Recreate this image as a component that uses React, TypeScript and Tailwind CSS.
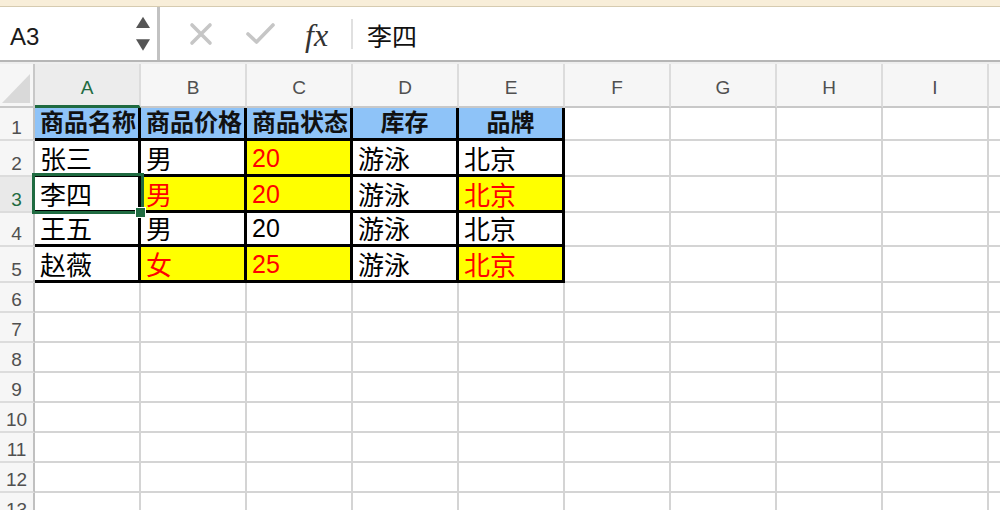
import React from "react";

type Cell = {
  t: string;
  bg?: "y" | "w" | "b";
  red?: boolean;
  center?: boolean;
  num?: boolean;
};

const cols = ["A", "B", "C", "D", "E", "F", "G", "H", "I"];

const table: Cell[][] = [
  [
    { t: "商品名称", bg: "b" },
    { t: "商品价格", bg: "b" },
    { t: "商品状态", bg: "b" },
    { t: "库存", bg: "b", center: true },
    { t: "品牌", bg: "b", center: true },
  ],
  [
    { t: "张三" },
    { t: "男" },
    { t: "20", bg: "y", red: true, num: true },
    { t: "游泳" },
    { t: "北京" },
  ],
  [
    { t: "李四" },
    { t: "男", bg: "y", red: true },
    { t: "20", bg: "y", red: true, num: true },
    { t: "游泳" },
    { t: "北京", bg: "y", red: true },
  ],
  [
    { t: "王五" },
    { t: "男" },
    { t: "20", num: true },
    { t: "游泳" },
    { t: "北京" },
  ],
  [
    { t: "赵薇" },
    { t: "女", bg: "y", red: true },
    { t: "25", bg: "y", red: true, num: true },
    { t: "游泳" },
    { t: "北京", bg: "y", red: true },
  ],
];

function DataCell({ c }: { c: Cell }) {
  if (c.bg === "b") {
    return (
      <div
        className={
          "flex items-center overflow-hidden whitespace-nowrap border-r-[3px] border-b-[3px] border-black bg-[#8ec3f8] text-[24px] font-bold leading-none text-[#111111] " +
          (c.center ? "justify-center" : "pl-[5px]")
        }
      >
        {c.t}
      </div>
    );
  }
  return (
    <div
      className={
        "flex items-end overflow-hidden whitespace-nowrap border-r-[3px] border-b-[3px] border-black pl-[5px] leading-none " +
        (c.bg === "y" ? "bg-[#ffff00] " : "bg-white ") +
        (c.red ? "text-[#ff0000] " : "text-black ") +
        (c.num ? "pb-[3px] text-[25px]" : "pb-[1px] text-[26px]")
      }
    >
      {c.t}
    </div>
  );
}

export default function App() {
  const rowCount = 13;
  const cells: React.ReactNode[] = [];

  cells.push(
    <div
      key="corner"
      className="relative border-r-2 border-b-2 border-[#c8c8c8] bg-[#f6f6f6]"
    >
      <svg className="absolute left-[2px] top-[10px]" width="29" height="29" viewBox="0 0 29 29">
        <polygon points="28,0 28,29 0,29" fill="#d9d9d9" />
      </svg>
    </div>
  );
  cols.forEach((c, i) => {
    cells.push(
      <div
        key={"h" + c}
        className={
          i === 0
            ? "flex items-center justify-center border-r-2 border-b-[3px] border-r-[#dcdcdc] border-b-[#1f6b41] bg-[#ececec] pt-[5px] text-[19px] leading-none text-[#1f6b41]"
            : "flex items-center justify-center border-r-2 border-b-2 border-r-[#dcdcdc] border-b-[#c8c8c8] bg-[#f6f6f6] pt-[4px] text-[19px] leading-none text-[#505050]"
        }
      >
        {c}
      </div>
    );
  });
  cells.push(
    <div key="hx" className="border-b-2 border-[#c8c8c8] bg-[#f6f6f6]" />
  );

  for (let r = 0; r < rowCount; r++) {
    const selected = r === 2;
    cells.push(
      <div
        key={"r" + r}
        className={
          selected
            ? "flex items-end justify-center border-r-2 border-b-2 border-r-[#c0c0c0] border-b-[#dcdcdc] bg-[#e9e9e9] pb-[2px] text-[19px] leading-none text-[#1f6b41]"
            : "flex items-end justify-center border-r-2 border-b-2 border-r-[#c0c0c0] border-b-[#dcdcdc] bg-[#f6f6f6] pb-[2px] text-[19px] leading-none text-[#505050]"
        }
      >
        {r + 1}
      </div>
    );
    for (let c = 0; c < 9; c++) {
      if (r < 5 && c < 5) {
        cells.push(<DataCell key={r + "-" + c} c={table[r][c]} />);
      } else {
        cells.push(
          <div
            key={r + "-" + c}
            className="border-r-2 border-b-2 border-[#d4d4d4] bg-white"
          />
        );
      }
    }
    cells.push(
      <div key={r + "-x"} className="border-b-2 border-[#d4d4d4] bg-white" />
    );
  }

  return (
    <div className="flex h-[510px] w-[1000px] flex-col overflow-hidden bg-white font-['Liberation_Sans','Noto_Sans_CJK_SC',sans-serif] text-black">
      {/* top strip */}
      <div className="h-[7px] shrink-0 border-b border-[#d6cbb0] bg-[#f8eed9]" />

      {/* formula bar */}
      <div className="flex h-[53px] shrink-0 items-center bg-white">
        <div className="flex h-full w-[157px] items-center justify-between pl-[10px] pr-[7px]">
          <span className="relative top-[3px] text-[24px] leading-none text-[#1a1a1a]">A3</span>
          <svg width="14" height="35" viewBox="0 0 14 35">
            <polygon points="0,12 7,0.7 14,12" fill="#555555" />
            <polygon points="0,23.3 14,23.3 7,34.7" fill="#555555" />
          </svg>
        </div>
        <div className="h-full w-[3px] bg-[#c2c2c2]" />
        <svg className="ml-[29px]" width="24" height="24" viewBox="0 0 24 24">
          <path d="M3 3 L21 21 M21 3 L3 21" stroke="#c6c6c6" strokeWidth="3.6" strokeLinecap="round" />
        </svg>
        <svg className="ml-[33px]" width="29" height="23" viewBox="0 0 29 23">
          <path d="M2 12 L10.5 20 L27 3" stroke="#c6c6c6" strokeWidth="3.6" strokeLinecap="round" strokeLinejoin="round" fill="none" />
        </svg>
        <span className="relative top-[1px] ml-[30px] w-[32px] font-['Liberation_Serif',serif] text-[32px] italic leading-none text-[#333333]">
          fx
        </span>
        <div className="ml-[14px] h-[30px] w-[2px] bg-[#e0e0e0]" />
        <span className="relative top-[2px] ml-[14px] font-['Noto_Sans_CJK_SC',sans-serif] text-[25px] leading-none text-[#111111]">
          李四
        </span>
      </div>

      {/* separator */}
      <div className="h-[2px] shrink-0 bg-[#b6b6b6]" />
      <div className="h-[2px] shrink-0 bg-[#eeeeee]" />

      {/* sheet */}
      <div className="relative shrink-0">
        <div className="grid grid-cols-[35px_repeat(9,106px)_1fr] grid-rows-[44px_33px_36px_36px_34px_36px_repeat(8,30px)]">
          {cells}
        </div>
        {/* selection */}
        <div className="absolute left-[32px] top-[109px] h-[41px] w-[112px] border-[3px] border-[#1f6b41]" />
        <div className="absolute left-[135px] top-[143px] h-[11px] w-[11px] border border-white bg-[#1f6b41]" />
      </div>
    </div>
  );
}
